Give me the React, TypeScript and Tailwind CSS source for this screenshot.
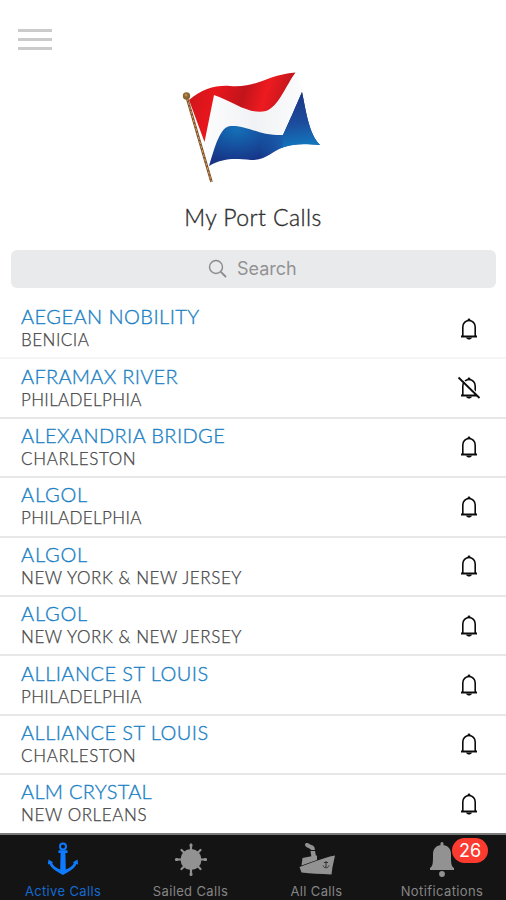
const calls = [
  { vessel: 'AEGEAN NOBILITY', port: 'BENICIA', vc: 'tracking-[0.45px]', pc: 'tracking-[0.5px]', line: 'bg-[#f5f5f5]' },
  { vessel: 'AFRAMAX RIVER', port: 'PHILADELPHIA', vc: 'tracking-[0.3px]', pc: 'tracking-[0.35px]', line: 'bg-[#e7e7e7]', muted: true },
  { vessel: 'ALEXANDRIA BRIDGE', port: 'CHARLESTON', vc: 'tracking-[0.4px]', pc: 'tracking-[0.65px]', line: 'bg-[#e7e7e7]' },
  { vessel: 'ALGOL', port: 'PHILADELPHIA', vc: 'tracking-[0.8px]', pc: 'tracking-[0.35px]', line: 'bg-[#e7e7e7]' },
  { vessel: 'ALGOL', port: 'NEW YORK & NEW JERSEY', vc: 'tracking-[0.8px]', pc: 'tracking-[0.58px]', line: 'bg-[#e7e7e7]' },
  { vessel: 'ALGOL', port: 'NEW YORK & NEW JERSEY', vc: 'tracking-[0.8px]', pc: 'tracking-[0.58px]', line: 'bg-[#e7e7e7]' },
  { vessel: 'ALLIANCE ST LOUIS', port: 'PHILADELPHIA', vc: 'tracking-[0.45px]', pc: 'tracking-[0.35px]', line: 'bg-[#e7e7e7]' },
  { vessel: 'ALLIANCE ST LOUIS', port: 'CHARLESTON', vc: 'tracking-[0.45px]', pc: 'tracking-[0.65px]', line: 'bg-[#e7e7e7]' },
  { vessel: 'ALM CRYSTAL', port: 'NEW ORLEANS', vc: 'tracking-[0.3px]', pc: 'tracking-[0.6px]', line: 'bg-white' },
];

function Flag() {
  return (
    <svg width="140" height="114" viewBox="0 0 140 114" className="block">
      <defs>
        <linearGradient id="red" x1="0" x2="1" y1="0" y2="0.2">
          <stop offset="0" stopColor="#c9151c" />
          <stop offset="0.3" stopColor="#e8161c" />
          <stop offset="0.55" stopColor="#c2141b" />
          <stop offset="0.75" stopColor="#ee1b20" />
          <stop offset="1" stopColor="#b9161b" />
        </linearGradient>
        <radialGradient id="blueL" cx="0.25" cy="0.5" r="0.45">
          <stop offset="0" stopColor="#1470b8" />
          <stop offset="1" stopColor="#173487" />
        </radialGradient>
        <linearGradient id="blueR" x1="0.4" x2="0.5" y1="0" y2="1">
          <stop offset="0" stopColor="#1b3585" />
          <stop offset="0.55" stopColor="#1c4c9c" />
          <stop offset="1" stopColor="#1279bf" />
        </linearGradient>
        <linearGradient id="fade" x1="0" x2="1">
          <stop offset="0" stopColor="#1a5fae" stopOpacity="0" />
          <stop offset="1" stopColor="#1a5fae" />
        </linearGradient>
        <linearGradient id="white" x1="0" x2="1">
          <stop offset="0" stopColor="#ffffff" />
          <stop offset="0.5" stopColor="#f1f2f5" />
          <stop offset="1" stopColor="#ffffff" />
        </linearGradient>
      </defs>
      <path d="M9 28C24 16 36 15 52 16C78 18 84 5 113 1.500L122 21L137 74C124 73 117 71 104 74C89 79 84 89 70 89C56 88 44 86 27 96Z" fill="url(#white)" />
      <path d="M7 29C20 18 34 14 48 15C76 17 84 4 113.500 1.500C103 16 97 35 84 40C67 44 52 31 32 24L22.500 71Z" fill="url(#red)" />
      <path d="M27 95C33 76 38 55 49 55C65 54 77 65 101 64C107 51 114 35 120 21C124 40 127 63 138 74C124 73 114 72 102 76C89 80 86 89 69 89C54 88 43 86 27 95Z" fill="url(#blueL)" />
      <path d="M76 62C84 64 92 64 101 64V76.500C91 80 87 84 80 87Z" fill="url(#fade)" />
      <path d="M101 64C107 51 114 35 120 21C124 40 127 63 138 74C124 73 114 72 100.500 76.500Z" fill="url(#blueR)" />
      <path d="M5 27L29.500 111" stroke="#7c4d26" strokeWidth="2.600" />
      <path d="M5 27L29.500 111" stroke="#d3a66c" strokeWidth="1" strokeDasharray="3 1.500" />
      <circle cx="4.500" cy="25" r="3.700" fill="#8d6433" />
      <circle cx="4" cy="24" r="1.500" fill="#b98e50" />
    </svg>
  );
}

function Bell({ muted }: { muted?: boolean }) {
  return (
    <svg width="24" height="24" viewBox="0 0 24 24" fill="none" stroke="#0c0c0c" className="block">
      <path d="M5.800 19V10C5.800 6.300 8.500 3.500 12 3.500S18.200 6.300 18.200 10V19" strokeWidth="1.600" />
      <path d="M4 19.500H20" strokeWidth="2" />
      <circle cx="12" cy="2.800" r="1.400" fill="#0c0c0c" stroke="none" />
      <path d="M9 20.500H15C14.500 21.900 13.200 22.500 12 22.500S9.500 21.900 9 20.500Z" fill="#0c0c0c" stroke="none" />
      {muted && (
        <>
          <path d="M3 1L23.500 21" stroke="#ffffff" strokeWidth="1.500" />
          <path d="M1.500 1.500L22.500 22" strokeWidth="1.800" />
        </>
      )}
    </svg>
  );
}

function Anchor() {
  return (
    <svg width="32" height="34" viewBox="0 0 32 34" className="block" fill="#0e7afe">
      <circle cx="16" cy="4.500" r="3" fill="none" stroke="#0e7afe" strokeWidth="2" />
      <path d="M11.500 8.200H20.500V11H18.400L18.800 27.500C22 26.500 25.500 24 27 21L25.700 20.500L30.500 17.500L31.200 22.500L29.500 22C27.500 27 22 29.500 16 33C10 29.500 4.500 27 2.500 22L0.800 22.500L1.500 17.500L6.300 20.500L5 21C6.500 24 10 26.500 13.200 27.500L13.600 11H11.500Z" />
    </svg>
  );
}

function Sun() {
  return (
    <svg width="32" height="34" viewBox="0 0 32 34" className="block" stroke="#929292" fill="#929292">
      <circle cx="16" cy="17.500" r="10.500" stroke="none" />
      <path d="M16 7.500V2.500M16 27.500V32.500M6 17.500H1M26 17.500H31M9 10.500L6.500 8M23 10.500L25.500 8M9 24.500L6.500 27M23 24.500L25.500 27" strokeWidth="2.200" strokeLinecap="round" />
      <path d="M16 3.500V3M16 32V32.500M2 17.500H1.500M30 17.500H30.500" strokeWidth="3" strokeLinecap="round" />
    </svg>
  );
}

function Ship() {
  return (
    <svg width="38" height="34" viewBox="0 0 38 34" className="block" fill="#929292">
      <path d="M7 2.500C7 .5 10 .5 11.500 2C13 3.200 15.500 3 16.500 5.500L17 8H13C12.500 6 7 6 7 2.500Z" />
      <path d="M12.500 9H17L18 14.500L13.500 15.500Z" />
      <path d="M4.500 16L12 14.500L19 13.500V18L3.500 23.500Z" />
      <path d="M1.500 25L18 19C24 17 30 14.700 37 13.500L34.500 25L33.500 32.500C22 32 13 31.500 3.500 30.500Z" />
      <path d="M28 19V25.500M26 20.500H30M25 23.500C26 26.500 30 26.500 31 23.500" stroke="#333333" strokeWidth="1" fill="none" />
    </svg>
  );
}

function SolidBell() {
  return (
    <svg width="26" height="36" viewBox="0 0 26 36" className="block" fill="#929292">
      <rect x="11.500" y="0" width="3" height="5" rx="1.500" />
      <path d="M13 3C19 3 22 7 22 12C22 21 22 24 25 26V28H1V26C4 24 4 21 4 12C4 7 7 3 13 3Z" />
      <circle cx="13" cy="32" r="2.900" />
    </svg>
  );
}

const tabs = [
  { label: 'Active Calls', icon: <Anchor />, color: 'text-[#1469cf]', w: 'w-[126px]', t: 'tracking-[0.35px]' },
  { label: 'Sailed Calls', icon: <Sun />, color: 'text-[#858585]', w: 'w-[129px]', t: 'tracking-[0.35px]' },
  { label: 'All Calls', icon: <Ship />, color: 'text-[#858585]', w: 'w-[123px]', t: 'tracking-[0.35px]' },
  { label: 'Notifications', icon: <SolidBell />, color: 'text-[#858585]', w: 'w-[128px]', t: 'tracking-[0.4px]', badge: '26' },
];

export default function App() {
  return (
    <div className="flex h-[900px] w-[506px] flex-col overflow-hidden bg-white font-['Lato',sans-serif]">
      <header className="flex h-[300px] shrink-0 flex-col">
        <div className="flex h-[71px] flex-col gap-[6px] pt-[29px] pl-[18px]">
          <div className="h-[3px] w-[34px] bg-[#cbcbcb]" />
          <div className="h-[3px] w-[34px] bg-[#cbcbcb]" />
          <div className="h-[3px] w-[34px] bg-[#cbcbcb]" />
        </div>
        <div className="pl-[182px]">
          <Flag />
        </div>
        <h1 className="mt-[16px] h-[32px] text-center text-[23px] leading-[32px] font-light tracking-[0.4px] text-[#2e2e2e] [-webkit-text-stroke:0.35px_#2e2e2e]">My Port Calls</h1>
        <div className="mt-[17px] ml-[11px] flex h-[38px] w-[485px] items-center rounded-[6px] bg-[#e9eaeb] pl-[197px]">
          <svg width="20" height="20" viewBox="0 0 20 20" fill="none" stroke="#8b8b8e" className="block">
            <circle cx="8" cy="8" r="6.500" strokeWidth="1.400" />
            <path d="M12.800 12.800L18 18" strokeWidth="1.800" />
          </svg>
          <span className="ml-[9px] font-['Inter',sans-serif] text-[18px] leading-[20px] text-[#929295]">Search</span>
        </div>
      </header>
      <ul className="flex h-[533px] shrink-0 flex-col overflow-hidden">
        {calls.map((c, i) => (
          <li key={i} className="flex h-[59.400px] shrink-0 flex-col">
            <div className="flex flex-1 items-center justify-between pr-[25px] pl-[21px]">
              <div>
                <div className={`h-[23px] text-[20px] leading-[21px] font-light whitespace-nowrap text-[#1a7fc4] [-webkit-text-stroke:0.35px_#1a7fc4] ${c.vc}`}>{c.vessel}</div>
                <div className={`h-[22px] text-[17px] leading-[22px] font-light whitespace-nowrap text-[#444444] [-webkit-text-stroke:0.25px_#444444] ${c.pc}`}>{c.port}</div>
              </div>
              <Bell muted={c.muted} />
            </div>
            <div className={`h-[2px] shrink-0 ${c.line}`} />
          </li>
        ))}
      </ul>
      <nav className="flex h-[67px] shrink-0 border-t-2 border-[#7a7a7a] bg-[#141414] font-['Inter',sans-serif]">
        {tabs.map((t) => (
          <div key={t.label} className={`flex flex-col items-center pt-[7px] ${t.w}`}>
            <div className="relative flex h-[36px] items-start">
              {t.icon}
              {t.badge && (
                <span className="absolute -top-[4px] left-[23px] flex h-[25px] w-[36px] items-center justify-center rounded-full bg-[#fc3b30] text-[18px] text-white">
                  {t.badge}
                </span>
              )}
            </div>
            <span className={`mt-[4px] text-[13px] leading-[18px] whitespace-nowrap ${t.color} ${t.t}`}>{t.label}</span>
          </div>
        ))}
      </nav>
    </div>
  );
}
